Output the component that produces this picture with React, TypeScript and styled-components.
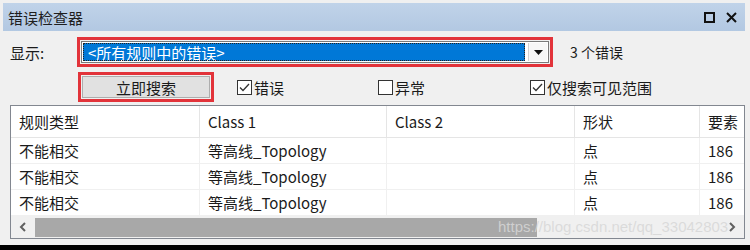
import styled, { createGlobalStyle } from "styled-components";

const GlobalStyle = createGlobalStyle`
  html, body {
    margin: 0;
    padding: 0;
    background: #000;
  }
  body {
    font-family: "Noto Sans CJK SC", "Noto Sans", sans-serif;
    font-size: 15px;
    color: #1a1a1a;
  }
`;

const columns = [
  { title: "规则类型", width: 189 },
  { title: "Class 1", width: 187 },
  { title: "Class 2", width: 188 },
  { title: "形状", width: 125 },
  { title: "要素", width: 60 },
];

const rows = [
  ["不能相交", "等高线_Topology", "", "点", "186"],
  ["不能相交", "等高线_Topology", "", "点", "186"],
  ["不能相交", "等高线_Topology", "", "点", "186"],
];

function CheckBox({ checked }: { checked: boolean }) {
  return (
    <svg width="15" height="15" viewBox="0 0 15 15">
      <rect x="0.5" y="0.5" width="14" height="14" fill="#fff" stroke="#333" />
      {checked && (
        <path d="M3 7.5 L6 10.5 L12 4" fill="none" stroke="#333" strokeWidth="1.3" />
      )}
    </svg>
  );
}

function Chevron({ dir }: { dir: "left" | "right" }) {
  return (
    <svg width="8" height="10" viewBox="0 0 8 10">
      <path
        d={dir === "left" ? "M6 1 L2 5 L6 9" : "M2 1 L6 5 L2 9"}
        fill="none"
        stroke="#606060"
        strokeWidth="2"
      />
    </svg>
  );
}

export default function App() {
  return (
    <>
      <GlobalStyle />
      <Window>
        <TitleBar>
          <TitleText>错误检查器</TitleText>
          <TitleIcons>
            <MaxIcon />
            <svg width="11" height="11" viewBox="0 0 11 11">
              <path d="M1 1 L10 10 M10 1 L1 10" stroke="#111" strokeWidth="2" />
            </svg>
          </TitleIcons>
        </TitleBar>

        <Row>
          <Label>显示:</Label>
          <Highlight $width={476}>
            <Combo>
              <ComboValue>&lt;所有规则中的错误&gt;</ComboValue>
              <ComboArrow>
                <svg width="9" height="5" viewBox="0 0 9 5">
                  <path d="M0 0 L9 0 L4.5 5 Z" fill="#111" />
                </svg>
              </ComboArrow>
            </Combo>
          </Highlight>
          <Count>3 个错误</Count>
        </Row>

        <Row $top={5}>
          <Highlight $width={136} $left={78}>
            <SearchButton>立即搜索</SearchButton>
          </Highlight>
          <CheckItem $width={141} $left={23}>
            <CheckBox checked />
            错误
          </CheckItem>
          <CheckItem $width={152}>
            <CheckBox checked={false} />
            异常
          </CheckItem>
          <CheckItem>
            <CheckBox checked />
            仅搜索可见范围
          </CheckItem>
        </Row>

        <TableFrame>
          <TableBody>
            <HeaderRow>
              {columns.map((c) => (
                <Cell key={c.title} $width={c.width} $header>
                  {c.title}
                </Cell>
              ))}
            </HeaderRow>
            {rows.map((r, i) => (
              <DataRow key={i}>
                {r.map((v, j) => (
                  <Cell key={j} $width={columns[j].width}>
                    {v}
                  </Cell>
                ))}
              </DataRow>
            ))}
          </TableBody>
          <ScrollBar>
            <ScrollArrow>
              <Chevron dir="left" />
            </ScrollArrow>
            <ScrollTrack>
              <ScrollThumb />
            </ScrollTrack>
            <ScrollArrow>
              <Chevron dir="right" />
            </ScrollArrow>
            <Watermark>https://blog.csdn.net/qq_33042803</Watermark>
          </ScrollBar>
        </TableFrame>
      </Window>
    </>
  );
}

const Window = styled.div`
  width: 750px;
  height: 245px;
  background: #f0f0f0;
  padding-top: 3px;
  box-sizing: border-box;
  overflow: hidden;
`;

const TitleBar = styled.div`
  height: 28px;
  margin: 0 5px 0 3px;
  background: linear-gradient(#c0d3e9, #b2c8e2);
  display: flex;
  align-items: center;
  justify-content: space-between;
  padding: 0 8px 0 5px;
`;

const TitleText = styled.span`
  font-size: 15px;
  color: #1e1e1e;
`;

const TitleIcons = styled.div`
  display: flex;
  align-items: center;
  gap: 11px;
  margin-top: 1px;
`;

const MaxIcon = styled.div`
  width: 11px;
  height: 11px;
  box-sizing: border-box;
  border: 2px solid #111;
`;

const Row = styled.div<{ $top?: number }>`
  display: flex;
  align-items: center;
  height: 30px;
  margin-top: ${(p) => p.$top ?? 6}px;
`;

const Label = styled.span`
  width: 77px;
  padding-left: 10px;
  box-sizing: border-box;
`;

const Highlight = styled.div<{ $width: number; $left?: number }>`
  width: ${(p) => p.$width}px;
  height: 30px;
  margin-left: ${(p) => p.$left ?? 0}px;
  box-sizing: border-box;
  border: 3px solid #e2333a;
  padding: 1px;
  display: flex;
`;

const Combo = styled.div`
  flex: 1;
  display: flex;
  border: 1px solid #7a7a7a;
  background: #fff;
  padding: 1px;
`;

const ComboValue = styled.div`
  flex: 1;
  background: #0078d7;
  color: #fff;
  outline: 1px dotted #222;
  outline-offset: -1px;
  display: flex;
  align-items: center;
  padding-left: 5px;
  font-size: 15px;
  line-height: 1;
`;

const ComboArrow = styled.div`
  width: 18px;
  display: flex;
  align-items: center;
  justify-content: center;
  background: #f7f7f7;
  margin-left: 3px;
  border-left: 1px solid #d0d0d0;
`;

const Count = styled.span`
  margin-left: 17px;
  font-size: 14px;
`;

const SearchButton = styled.div`
  flex: 1;
  background: #e1e1e1;
  border: 1px solid #adadad;
  display: flex;
  align-items: center;
  justify-content: center;
  font-size: 15px;
`;

const CheckItem = styled.label<{ $width?: number; $left?: number }>`
  display: flex;
  align-items: center;
  gap: 2px;
  margin-left: ${(p) => p.$left ?? 0}px;
  width: ${(p) => (p.$width ? `${p.$width}px` : "auto")};
  font-size: 15px;
`;

const TableFrame = styled.div`
  margin: 3px 5px 0 10px;
  height: 134px;
  box-sizing: border-box;
  border: 1px solid #828790;
  background: #fff;
  display: flex;
  flex-direction: column;
  position: relative;
  overflow: hidden;
`;

const TableBody = styled.div`
  flex: 1;
  overflow: hidden;
`;

const HeaderRow = styled.div`
  display: flex;
  height: 31px;
  border-bottom: 1px solid #e5e5e5;
`;

const DataRow = styled.div`
  display: flex;
  height: 25px;
  border-bottom: 1px solid #f0f0f0;
`;

const Cell = styled.div<{ $width: number; $header?: boolean }>`
  flex: none;
  width: ${(p) => p.$width}px;
  box-sizing: border-box;
  padding-left: 8px;
  border-right: 1px solid ${(p) => (p.$header ? "#e5e5e5" : "#f0f0f0")};
  display: flex;
  align-items: center;
  white-space: nowrap;
  font-size: 15px;
  color: #1a1a1a;
`;

const ScrollBar = styled.div`
  height: 22px;
  display: flex;
  align-items: stretch;
  background: #f0f0f0;
  position: relative;
`;

const ScrollArrow = styled.div`
  width: 24px;
  display: flex;
  align-items: center;
  justify-content: center;
`;

const ScrollTrack = styled.div`
  flex: 1;
  display: flex;
  align-items: center;
`;

const ScrollThumb = styled.div`
  width: 502px;
  height: 19px;
  background: #a8a8a8;
`;

const Watermark = styled.span`
  position: absolute;
  left: 487px;
  top: 1px;
  font-family: "Liberation Sans", sans-serif;
  font-size: 15px;
  line-height: 20px;
  color: rgba(215, 215, 215, 0.85);
  white-space: nowrap;
  pointer-events: none;
`;
